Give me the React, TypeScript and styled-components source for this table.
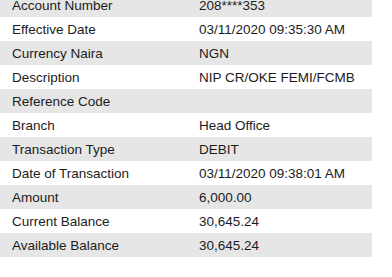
import styled, { createGlobalStyle } from "styled-components";

const GlobalStyle = createGlobalStyle`
  html, body {
    margin: 0;
    padding: 0;
    background: #ffffff;
  }
  body {
    font-family: "Liberation Sans", Arial, sans-serif;
    overflow: hidden;
  }
`;

const Table = styled.div`
  width: 372px;
  margin-top: -7px;
  display: flex;
  flex-direction: column;
`;

const Row = styled.div<{ $shaded: boolean }>`
  height: 24px;
  display: grid;
  grid-template-columns: 199px 1fr;
  align-items: center;
  background-color: ${(p) => (p.$shaded ? "#e6e6e6" : "#ffffff")};
  color: #1c1c1c;
  font-size: 13.5px;
`;

const Label = styled.span`
  padding-left: 12px;
  white-space: nowrap;
`;

const Value = styled.span`
  white-space: nowrap;
`;

const rows: [string, string][] = [
  ["Account Number", "208****353"],
  ["Effective Date", "03/11/2020 09:35:30 AM"],
  ["Currency Naira", "NGN"],
  ["Description", "NIP CR/OKE FEMI/FCMB"],
  ["Reference Code", ""],
  ["Branch", "Head Office"],
  ["Transaction Type", "DEBIT"],
  ["Date of Transaction", "03/11/2020 09:38:01 AM"],
  ["Amount", "6,000.00"],
  ["Current Balance", "30,645.24"],
  ["Available Balance", "30,645.24"],
];

const App = () => {
  return (
    <>
      <GlobalStyle />
      <Table>
        {rows.map(([label, value], i) => (
          <Row key={label} $shaded={i % 2 === 0}>
            <Label>{label}</Label>
            <Value>{value}</Value>
          </Row>
        ))}
      </Table>
    </>
  );
};

export default App;
